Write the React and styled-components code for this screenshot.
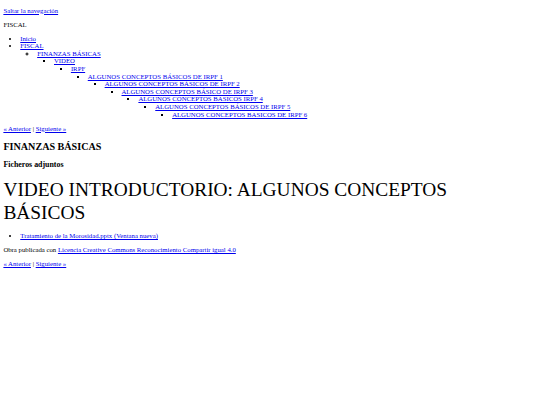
import React from 'react';
import styled, { createGlobalStyle } from 'styled-components';

// the page was captured at 1280px wide and shown at 540px, so every size
// below is roughly the browser default multiplied by 0.42
const GlobalStyle = createGlobalStyle`
    html {
        background: #ffffff;
    }

    body {
        margin: 0;
        padding: 0 3.375px;
        font-family: "Liberation Serif", "Times New Roman", serif;
        font-size: 6.75px;
        line-height: 7.6px;
        color: #000000;
    }

    a {
        color: #0000ee;
        text-decoration: underline;
    }
`

const StyledText = styled.p`
    margin: 6.5px 0;
    font-family: "Liberation Serif", "Times New Roman", serif;
    font-size: 6.75px;
    line-height: 7.6px;
`

const StyledNavList = styled.ul`
    margin: ${props => (props.$nested ? '0' : '6.5px 0')};
    padding-left: 16.875px;
    list-style-type: ${props => props.$bullet || 'disc'};
`

const StyledSectionTitle = styled.h2`
    font-family: "Liberation Serif", "Times New Roman", serif;
    font-size: 10.125px;
    line-height: 11.4px;
    font-weight: bold;
    margin: 8.2px 0;
`

const StyledSubTitle = styled.h3`
    font-family: "Liberation Serif", "Times New Roman", serif;
    font-size: 7.9px;
    line-height: 9px;
    font-weight: bold;
    margin: 7.6px 0;
`

const StyledPageTitle = styled.h1`
    font-family: "Liberation Serif", "Times New Roman", serif;
    font-size: 19.4px;
    line-height: 22.6px;
    font-weight: 400;
    max-width: 506px;
    margin: 10px 0 7.8px 0;
`

const StyledFileList = styled.ul`
    margin: 6.5px 0;
    padding-left: 16.875px;
`

const Pager = () => (
    <StyledText>
        <a href="#anterior">« Anterior</a> | <a href="#siguiente">Siguiente »</a>
    </StyledText>
)

const irpf = [
    'ALGUNOS CONCEPTOS BÁSICOS DE IRPF 1',
    'ALGUNOS CONCEPTOS BÁSICOS DE IRPF 2',
    'ALGUNOS CONCEPTOS BÁSICO DE IRPF 3',
    'ALGUNOS CONCEPTOS BASICOS IRPF 4',
    'ALGUNOS CONCEPTOS BÁSICOS DE IRPF 5',
    'ALGUNOS CONCEPTOS BASICOS DE IRPF 6',
]

// each entry nests the next one, like the original menu markup
const NestedItems = ({ items }) => {
    if (!items.length) return null;
    const [first, ...rest] = items;
    return (
        <StyledNavList $nested $bullet="square">
            <li>
                <a href="#irpf">{first}</a>
                <NestedItems items={rest} />
            </li>
        </StyledNavList>
    )
}

const App = () => {
    return (
        <>
            <GlobalStyle />
            <StyledText>
                <a href="#contenido">Saltar la navegación</a>
            </StyledText>
            <StyledText>FISCAL</StyledText>
            <StyledNavList>
                <li><a href="#inicio">Inicio</a></li>
                <li>
                    <a href="#fiscal">FISCAL</a>
                    <StyledNavList $nested $bullet="circle">
                        <li>
                            <a href="#finanzas">FINANZAS BÁSICAS</a>
                            <StyledNavList $nested $bullet="square">
                                <li>
                                    <a href="#video">VIDEO</a>
                                    <StyledNavList $nested $bullet="square">
                                        <li>
                                            <a href="#irpf">IRPF</a>
                                            <NestedItems items={irpf} />
                                        </li>
                                    </StyledNavList>
                                </li>
                            </StyledNavList>
                        </li>
                    </StyledNavList>
                </li>
            </StyledNavList>
            <Pager />
            <StyledSectionTitle id="contenido">FINANZAS BÁSICAS</StyledSectionTitle>
            <StyledSubTitle>Ficheros adjuntos</StyledSubTitle>
            <StyledPageTitle>VIDEO INTRODUCTORIO: ALGUNOS CONCEPTOS BÁSICOS</StyledPageTitle>
            <StyledFileList>
                <li>
                    <a href="#fichero">Tratamiento de la Morosidad.pptx (Ventana nueva)</a>
                </li>
            </StyledFileList>
            <StyledText>
                Obra publicada con <a href="#licencia">Licencia Creative Commons Reconocimiento Compartir igual 4.0</a>
            </StyledText>
            <Pager />
        </>
    )
}

export default App;
